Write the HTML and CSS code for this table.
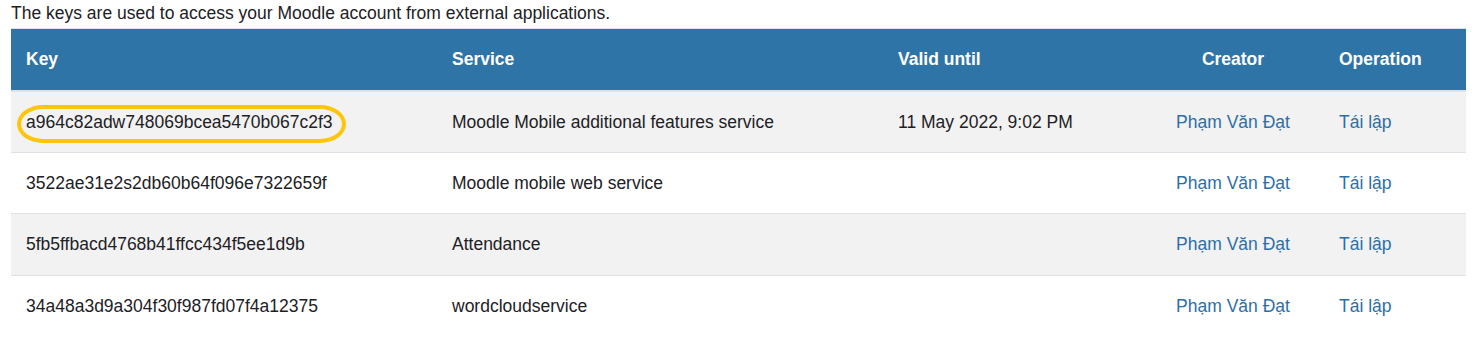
FILE: index.html
```html
<!DOCTYPE html>
<html lang="en">
<head>
<meta charset="utf-8">
<title>Security keys</title>
<link rel="stylesheet" href="styles.css">
</head>
<body>
<div class="page">
  <p class="intro">The keys are used to access your Moodle account from external applications.</p>
  <table class="keys">
    <colgroup>
      <col class="c-key"><col class="c-service"><col class="c-valid"><col class="c-creator"><col class="c-op">
    </colgroup>
    <thead>
      <tr>
        <th>Key</th>
        <th>Service</th>
        <th>Valid until</th>
        <th class="center">Creator</th>
        <th>Operation</th>
      </tr>
    </thead>
    <tbody>
      <tr class="odd">
        <td><span class="highlight">a964c82adw748069bcea5470b067c2f3</span></td>
        <td>Moodle Mobile additional features service</td>
        <td>11 May 2022, 9:02 PM</td>
        <td class="center"><a href="#">Phạm Văn Đạt</a></td>
        <td><a href="#">Tái lập</a></td>
      </tr>
      <tr>
        <td>3522ae31e2s2db60b64f096e7322659f</td>
        <td>Moodle mobile web service</td>
        <td></td>
        <td class="center"><a href="#">Phạm Văn Đạt</a></td>
        <td><a href="#">Tái lập</a></td>
      </tr>
      <tr class="odd">
        <td>5fb5ffbacd4768b41ffcc434f5ee1d9b</td>
        <td>Attendance</td>
        <td></td>
        <td class="center"><a href="#">Phạm Văn Đạt</a></td>
        <td><a href="#">Tái lập</a></td>
      </tr>
      <tr>
        <td>34a48a3d9a304f30f987fd07f4a12375</td>
        <td>wordcloudservice</td>
        <td></td>
        <td class="center"><a href="#">Phạm Văn Đạt</a></td>
        <td><a href="#">Tái lập</a></td>
      </tr>
    </tbody>
  </table>
</div>
</body>
</html>
```

FILE: styles.css
```css
html, body {
  margin: 0;
  padding: 0;
  background: #ffffff;
}

body {
  font-family: "Liberation Sans", Arial, sans-serif;
  font-size: 17.5px;
  line-height: 1.5;
  color: #1d2125;
}

.page {
  padding: 0 13px 0 11px;
}

.intro {
  margin: 0 0 2px 0;
}

.keys {
  width: 1455px;
  border-collapse: collapse;
  table-layout: fixed;
}

.c-key { width: 426px; }
.c-service { width: 446px; }
.c-valid { width: 259px; }
.c-creator { width: 182px; }
.c-op { width: 142px; }

.keys th,
.keys td {
  padding: 17px 15px;
  text-align: left;
  vertical-align: top;
  white-space: nowrap;
}

.keys tbody td {
  padding-top: 17.1px;
  padding-bottom: 17.1px;
  border-top: 1px solid #dee2e6;
}

.keys thead th {
  background: #2f74a6;
  color: #ffffff;
  font-weight: bold;
  border-top: 1px solid #dee2e6;
  border-bottom: 2px solid #dee2e6;
}

.keys tbody tr.odd td {
  background: #f2f2f2;
}

.keys .center {
  text-align: center;
}

.keys a {
  color: #2c6fa7;
  text-decoration: none;
}

.highlight {
  position: relative;
  display: inline-block;
}

.highlight::after {
  content: "";
  position: absolute;
  top: -4px;
  bottom: -8px;
  left: -9px;
  right: -13px;
  border: 4px solid #fdc60d;
  border-radius: 26px / 19px;
  pointer-events: none;
}
```
